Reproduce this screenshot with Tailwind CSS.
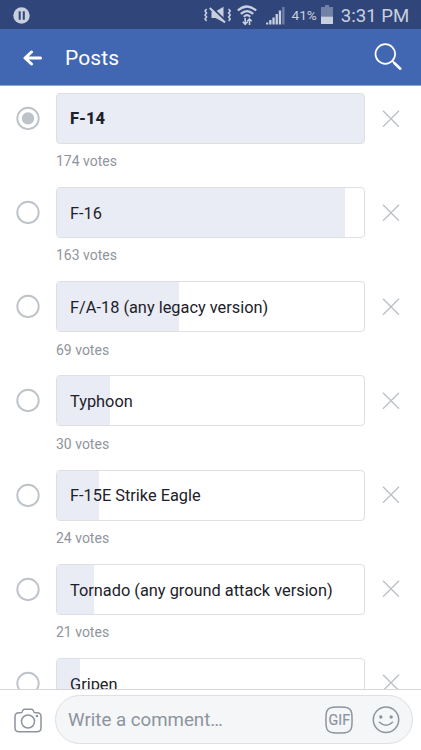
<!DOCTYPE html>
<html lang="en">
<head>
<meta charset="utf-8">
<title>Posts</title>
<script src="https://cdn.jsdelivr.net/npm/@tailwindcss/browser@4"></script>
</head>
<body class="bg-white">
<svg class="hidden">
  <symbol id="x" viewBox="0 0 18 18"><path d="M1 .7l16 16M17 .7L1 16.700" stroke="#bcc1c8" stroke-width="1.400" fill="none"/></symbol>
  <symbol id="ring" viewBox="0 0 24 24"><circle cx="12" cy="12.400" r="10.700" stroke="#bec3c9" stroke-width="1.900" fill="none"/></symbol>
</svg>
<div class="flex h-[750px] w-[421px] flex-col overflow-hidden font-['Roboto',sans-serif]">
  <div class="flex h-[29px] shrink-0 items-center bg-[#30467a] pl-[12.5px] text-[#c8cfdf]">
    <svg class="mt-[1px] size-[17px]" viewBox="0 0 17 17"><circle cx="8.500" cy="8.500" r="8.200" fill="#c8cfde"/><path d="M6.700 4.200v8.600M10.800 4.200v8.600" stroke="#30467a" stroke-width="2"/></svg>
    <svg class="ml-[174.5px] mt-[1px] h-[20px] w-[27px] shrink-0" viewBox="0 0 27 20" fill="none" stroke="#c8cfdf"><path d="M2.600 4L1 6l1.600 2L1 10l1.600 2L1 14l1.600 2M24.600 4L26.200 6l-1.600 2 1.600 2-1.600 2 1.600 2-1.600 2" stroke-width="1.500"/><path d="M7.500 6.500h4l8-4.800v15.600l-8-4.300h-4z" fill="#c8cfdf" stroke="none"/><path d="M7 1.900l15 14.500" stroke="#30467a" stroke-width="2.200"/><path d="M5.800 3l15.200 14.500" stroke-width="2"/></svg>
    <svg class="ml-[5.500px] mt-[1px] h-[21px] w-[20px] shrink-0" viewBox="0 0 20 21" fill="none" stroke="#c8cfdf" stroke-width="2.200"><path d="M.8 5.500Q10 -2.500 19.200 5.500M3.800 8.900Q10 3.200 16.200 8.900M6.800 11.700Q10 8.500 13.200 11.700"/><path d="M8.200 13v6M5.800 16.700l2.400 2.600 2.400-2.600M12.500 20v-6M10.200 16.200l2.300-2.400 2.200 2.400" stroke-width="1.600"/></svg>
    <svg class="ml-[9px] mt-[1px] h-[19px] w-[19px] shrink-0" viewBox="0 0 19 19"><path d="M0 16.500h2.300V18.500H0zM3.200 14h2.300v4.500H3.200zM6.400 11.500h2.300v7H6.400zM9.600 8h2.300v10.500H9.600zM12.800 4.500h2.300v14h-2.300z" fill="#c8cfdf"/><path d="M16.200 1h2.300v17.500h-2.300z" fill="#7180a6"/></svg>
    <span class="ml-[7px] mt-[3px] text-[13.600px] leading-none">41%</span>
    <svg class="ml-[4px] -mt-[1px] h-[19px] w-[12px] shrink-0" viewBox="0 0 12 19"><path d="M4 0h4v2h4v9.500H0V2h4z" fill="#7180a6"/><path d="M0 11.500h12V19H0z" fill="#c8cfdf"/></svg>
    <span class="ml-[8px] mt-[3px] whitespace-nowrap text-[18.600px] leading-none">3:31 PM</span>
  </div>
  <header class="flex h-[57px] shrink-0 items-center border-b border-[#8fa5d3] bg-[#4267b2] pl-[23px] pr-[19px] text-white">
    <svg class="mt-[1px] h-[16px] w-[19px]" viewBox="0 0 19 16" fill="none" stroke="#fff" stroke-width="3" stroke-linecap="round" stroke-linejoin="round"><path d="M8.500 2L2 8l6.500 6M2.500 8h15"/></svg>
    <h1 class="ml-[23px] mt-[3px] text-[21px] leading-none tracking-[0.1px]">Posts</h1>
    <svg class="ml-auto size-[28px]" viewBox="0 0 28 28" fill="none" stroke="#fff"><circle cx="11.300" cy="11" r="9.800" stroke-width="1.700"/><path d="M18.500 18.200l2.500 2.500" stroke-width="1.700"/><path d="M20.500 20.200l5.800 5.500" stroke-width="2.600" stroke-linecap="round"/></svg>
  </header>
  <main class="min-h-0 flex-1 overflow-hidden pt-[7px]">
    <div class="flex h-[94.150px] pl-4">
      <svg class="mt-[13px] size-6" viewBox="0 0 24 24"><use href="#ring"/><circle cx="12" cy="12.400" r="6.200" fill="#bec3c9"/></svg>
      <div class="ml-4 w-[309px]">
        <div class="relative flex h-[51px] items-center overflow-hidden rounded-[4px] border border-[#dddfe2] bg-[#e9ecf5] pl-[13px] pt-[1px]"><span class="relative text-[16.500px] font-extrabold leading-none text-[#1d2129]">F-14</span></div>
        <p class="mt-[9px] text-[14px] leading-[16px] text-[#90949c]">174 votes</p>
      </div>
      <svg class="ml-[16.500px] mt-[16.500px] size-[18px]"><use href="#x"/></svg>
    </div>
    <div class="flex h-[94.150px] pl-4">
      <svg class="mt-[13px] size-6"><use href="#ring"/></svg>
      <div class="ml-4 w-[309px]">
        <div class="relative flex h-[51px] items-center overflow-hidden rounded-[4px] border border-[#dddfe2] pl-[13px] pt-[3px]"><i class="absolute inset-y-0 left-0 w-[288px] bg-[#e9ecf5]"></i><span class="relative text-[16.350px] leading-none text-[#1d2129]">F-16</span></div>
        <p class="mt-[9px] text-[14px] leading-[16px] text-[#90949c]">163 votes</p>
      </div>
      <svg class="ml-[16.500px] mt-[16.500px] size-[18px]"><use href="#x"/></svg>
    </div>
    <div class="flex h-[94.150px] pl-4">
      <svg class="mt-[13px] size-6"><use href="#ring"/></svg>
      <div class="ml-4 w-[309px]">
        <div class="relative flex h-[51px] items-center overflow-hidden rounded-[4px] border border-[#dddfe2] pl-[13px] pt-[3px]"><i class="absolute inset-y-0 left-0 w-[122px] bg-[#e9ecf5]"></i><span class="relative text-[16.350px] leading-none text-[#1d2129]">F/A-18 (any legacy version)</span></div>
        <p class="mt-[9.500px] text-[14px] leading-[16px] text-[#90949c]">69 votes</p>
      </div>
      <svg class="ml-[16.500px] mt-[16.500px] size-[18px]"><use href="#x"/></svg>
    </div>
    <div class="flex h-[94.150px] pl-4">
      <svg class="mt-[13px] size-6"><use href="#ring"/></svg>
      <div class="ml-4 w-[309px]">
        <div class="relative flex h-[51px] items-center overflow-hidden rounded-[4px] border border-[#dddfe2] pl-[13px] pt-[3px]"><i class="absolute inset-y-0 left-0 w-[53px] bg-[#e9ecf5]"></i><span class="relative text-[16.350px] leading-none text-[#1d2129]">Typhoon</span></div>
        <p class="mt-[9.500px] text-[14px] leading-[16px] text-[#90949c]">30 votes</p>
      </div>
      <svg class="ml-[16.500px] mt-[16.500px] size-[18px]"><use href="#x"/></svg>
    </div>
    <div class="flex h-[94.150px] pl-4">
      <svg class="mt-[13px] size-6"><use href="#ring"/></svg>
      <div class="ml-4 w-[309px]">
        <div class="relative flex h-[51px] items-center overflow-hidden rounded-[4px] border border-[#dddfe2] pl-[13px] pt-[3px]"><i class="absolute inset-y-0 left-0 w-[42px] bg-[#e9ecf5]"></i><span class="relative text-[16.350px] leading-none text-[#1d2129]">F-15E Strike Eagle</span></div>
        <p class="mt-[9px] text-[14px] leading-[16px] text-[#90949c]">24 votes</p>
      </div>
      <svg class="ml-[16.500px] mt-[16px] size-[18px]"><use href="#x"/></svg>
    </div>
    <div class="flex h-[94.150px] pl-4">
      <svg class="mt-[13px] size-6"><use href="#ring"/></svg>
      <div class="ml-4 w-[309px]">
        <div class="relative flex h-[51px] items-center overflow-hidden rounded-[4px] border border-[#dddfe2] pl-[13px] pt-[3px]"><i class="absolute inset-y-0 left-0 w-[37px] bg-[#e9ecf5]"></i><span class="relative text-[16.350px] leading-none text-[#1d2129]">Tornado (any ground attack version)</span></div>
        <p class="mt-[9px] text-[14px] leading-[16px] text-[#90949c]">21 votes</p>
      </div>
      <svg class="ml-[16.500px] mt-[16px] size-[18px]"><use href="#x"/></svg>
    </div>
    <div class="flex h-[94.150px] pl-4">
      <svg class="mt-[13px] size-6"><use href="#ring"/></svg>
      <div class="ml-4 w-[309px]">
        <div class="relative flex h-[51px] items-center overflow-hidden rounded-[4px] border border-[#dddfe2] pl-[13px] pt-[3px]"><i class="absolute inset-y-0 left-0 w-[23px] bg-[#e9ecf5]"></i><span class="relative text-[16.350px] leading-none text-[#1d2129]">Gripen</span></div>
      </div>
      <svg class="ml-[16.500px] mt-[16px] size-[18px]"><use href="#x"/></svg>
    </div>
  </main>
  <footer class="flex h-[61px] shrink-0 items-start border-t border-[#d5d7db] bg-white pl-[14px]">
    <svg class="mt-[17.500px] h-[25px] w-[28px]" viewBox="0 0 28 25" fill="none" stroke="#8d949e" stroke-width="1.500"><path d="M5 4.800h1.500q1.200 0 1.700-1l.5-1.400q.4-1.200 1.800-1.200h7q1.400 0 1.800 1.200l.5 1.400q.5 1 1.700 1H23q4 0 4 4v11q0 4-4 4H5q-4 0-4-4v-11q0-4 4-4z"/><circle cx="14" cy="13.500" r="6.500"/><circle cx="23" cy="8" r=".6" fill="#8d949e"/></svg>
    <div class="ml-[13px] mt-[5px] flex h-[49px] w-[358px] items-center rounded-full border border-[#dddfe2] bg-[#f5f6f7] pl-[12px]">
      <span class="mt-[2px] whitespace-nowrap text-[18.700px] leading-none text-[#8d949e]">Write a comment…</span>
      <svg class="ml-auto size-[28px]" viewBox="0 0 28 28" fill="none" stroke="#8d949e" stroke-width="1.500"><path d="M8 1.200Q14 .7 20 1.200Q26.300 1.700 26.800 8Q27.300 14 26.800 20Q26.300 26.300 20 26.800Q14 27.300 8 26.800Q1.700 26.300 1.200 20Q.7 14 1.200 8Q1.700 1.700 8 1.200z"/><text x="3.600" y="19.300" textLength="21.500" lengthAdjust="spacingAndGlyphs" font-family="Roboto" font-size="15.500" fill="#8d949e" stroke="#8d949e" stroke-width=".2">GIF</text></svg>
      <svg class="ml-[19px] mr-[12px] size-[28px]" viewBox="0 0 28 28" fill="none" stroke="#8d949e" stroke-width="1.500" stroke-linecap="round"><circle cx="14" cy="13.700" r="12.700"/><path d="M7.500 16.200q6.500 6 13 0"/><circle cx="8.800" cy="11" r="1.700" fill="#8d949e" stroke="none"/><circle cx="19.200" cy="11" r="1.700" fill="#8d949e" stroke="none"/></svg>
    </div>
  </footer>
</div>
</body>
</html>
